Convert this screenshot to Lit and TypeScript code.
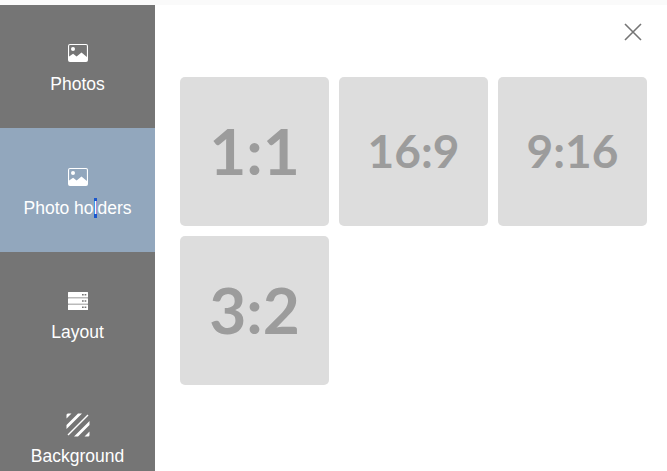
import { css, html, LitElement, svg } from 'lit';
import { customElement } from 'lit/decorators.js';
import { classMap } from 'lit/directives/class-map.js';

const photoIcon = svg`
  <path fill-rule="evenodd" d="M2 0h16a2 2 0 0 1 2 2v14a2 2 0 0 1-2 2H2a2 2 0 0 1-2-2V2a2 2 0 0 1 2-2zm0 1.100a.9.9 0 0 0-.9.9v10.600l4-2.800 3.500 2.700 4.900-4 5.400 4.400V2a.9.9 0 0 0-.9-.9H2z"/>
  <circle cx="5" cy="5" r="2"/>`;

const layoutIcon = svg`
  <path fill-rule="evenodd" d="M.5 0h19a.5.5 0 0 1 .5.500V5a.5.5 0 0 1-.5.500H.5A.5.5 0 0 1 0 5V.5A.5.5 0 0 1 .500 0zm13.500 2v1.500h1.700V2H14zm2.600 0v1.500h1.700V2h-1.700zM.5 6.300h19a.5.5 0 0 1 .5.500v4.400a.5.5 0 0 1-.5.500H.5a.5.5 0 0 1-.5-.500V6.800a.5.5 0 0 1 .5-.500zm13.500 2v1.500h1.700V8.300H14zm2.600 0v1.500h1.700V8.300h-1.700zM.5 12.500h19a.5.5 0 0 1 .5.500v4.500a.5.5 0 0 1-.5.500H.5a.5.5 0 0 1-.5-.500V13a.5.5 0 0 1 .5-.500zm13.500 2V16h1.700v-1.500H14zm2.600 0V16h1.700v-1.500h-1.700z"/>`;

const patternIcon = svg`
  <path d="M2 0.500h3.500L0.500 5.500V2a1.500 1.500 0 0 1 1.500-1.500zM12 0.500h4L0.500 16v-4zM21.500 1.500l1 1L2.500 22.500l-1-1zM23.500 8v4L12 23.500H8zM23.500 18.500V22a1.500 1.500 0 0 1-1.500 1.500h-3.500z"/>`;

const NAV = [
  { id: 'photos', label: html`Photos`, icon: photoIcon, box: '0 0 20 18', w: 20, h: 18 },
  {
    id: 'holders',
    label: html`Photo ho<span class="sel">l</span>ders`,
    icon: photoIcon,
    box: '0 0 20 18',
    w: 20,
    h: 18,
    active: true,
  },
  { id: 'layout', label: html`Layout`, icon: layoutIcon, box: '0 0 20 18', w: 20, h: 18 },
  { id: 'background', label: html`Background`, icon: patternIcon, box: '0 0 24 24', w: 24, h: 24 },
];

const RATIOS = [
  { label: '1:1', size: 64 },
  { label: '16:9', size: 46 },
  { label: '9:16', size: 46 },
  { label: '3:2', size: 64 },
];

@customElement('app-root')
export class AppRoot extends LitElement {
  static styles = css`
    :host {
      display: block;
      width: 667px;
      height: 471px;
      overflow: hidden;
      background: #ffffff;
      font-family: 'Liberation Sans', Arial, sans-serif;
    }

    .shell {
      display: flex;
      flex-direction: column;
      height: 100%;
    }

    .strip {
      flex: none;
      height: 5px;
      background: #fafafa;
    }

    .body {
      flex: 1;
      display: flex;
      min-height: 0;
    }

    .sidebar {
      flex: none;
      width: 155px;
      background: #757575;
      color: #ffffff;
      overflow: hidden;
    }

    .nav-item {
      height: 124px;
      box-sizing: border-box;
      padding-top: 38px;
      display: flex;
      flex-direction: column;
      align-items: center;
      gap: 10px;
      font-size: 17.5px;
      line-height: 20px;
    }

    .nav-item:first-child {
      height: 123px;
      padding-top: 37px;
    }

    .nav-item.active {
      background: #92a7bd;
    }

    .nav-icon {
      display: flex;
      align-items: center;
      justify-content: center;
      height: 22px;
    }

    .nav-icon svg {
      display: block;
      flex: none;
      fill: currentColor;
    }

    .sel {
      background: #1a56cc;
    }

    .main {
      flex: 1;
      position: relative;
      padding: 72px 20px 0 25px;
    }

    .close {
      position: absolute;
      top: 18px;
      right: 25px;
      width: 18px;
      height: 18px;
      display: block;
      stroke: #757575;
      stroke-width: 1.6;
      fill: none;
    }

    .grid {
      display: grid;
      grid-template-columns: repeat(3, 149px);
      grid-auto-rows: 149px;
      gap: 10px;
    }

    .tile {
      display: flex;
      align-items: center;
      justify-content: center;
      box-sizing: border-box;
      padding-bottom: 2px;
      background: #dddddd;
      border-radius: 5px;
      color: #9c9c9c;
      font-family: Lato, sans-serif;
      font-weight: 700;
    }
  `;

  render() {
    return html`
      <div class="shell">
        <div class="strip"></div>
        <div class="body">
          <nav class="sidebar">
            ${NAV.map(
              (item) => html`
                <div class=${classMap({ 'nav-item': true, active: !!item.active })}>
                  <div class="nav-icon">
                    <svg width=${item.w} height=${item.h} viewBox=${item.box}>${item.icon}</svg>
                  </div>
                  <div>${item.label}</div>
                </div>
              `,
            )}
          </nav>
          <main class="main">
            <svg class="close" viewBox="0 0 18 18"><path d="M1 1l16 16M17 1L1 17" /></svg>
            <div class="grid">
              ${RATIOS.map(
                (ratio) => html`<div class="tile" style="font-size: ${ratio.size}px">${ratio.label}</div>`,
              )}
            </div>
          </main>
        </div>
      </div>
    `;
  }
}
